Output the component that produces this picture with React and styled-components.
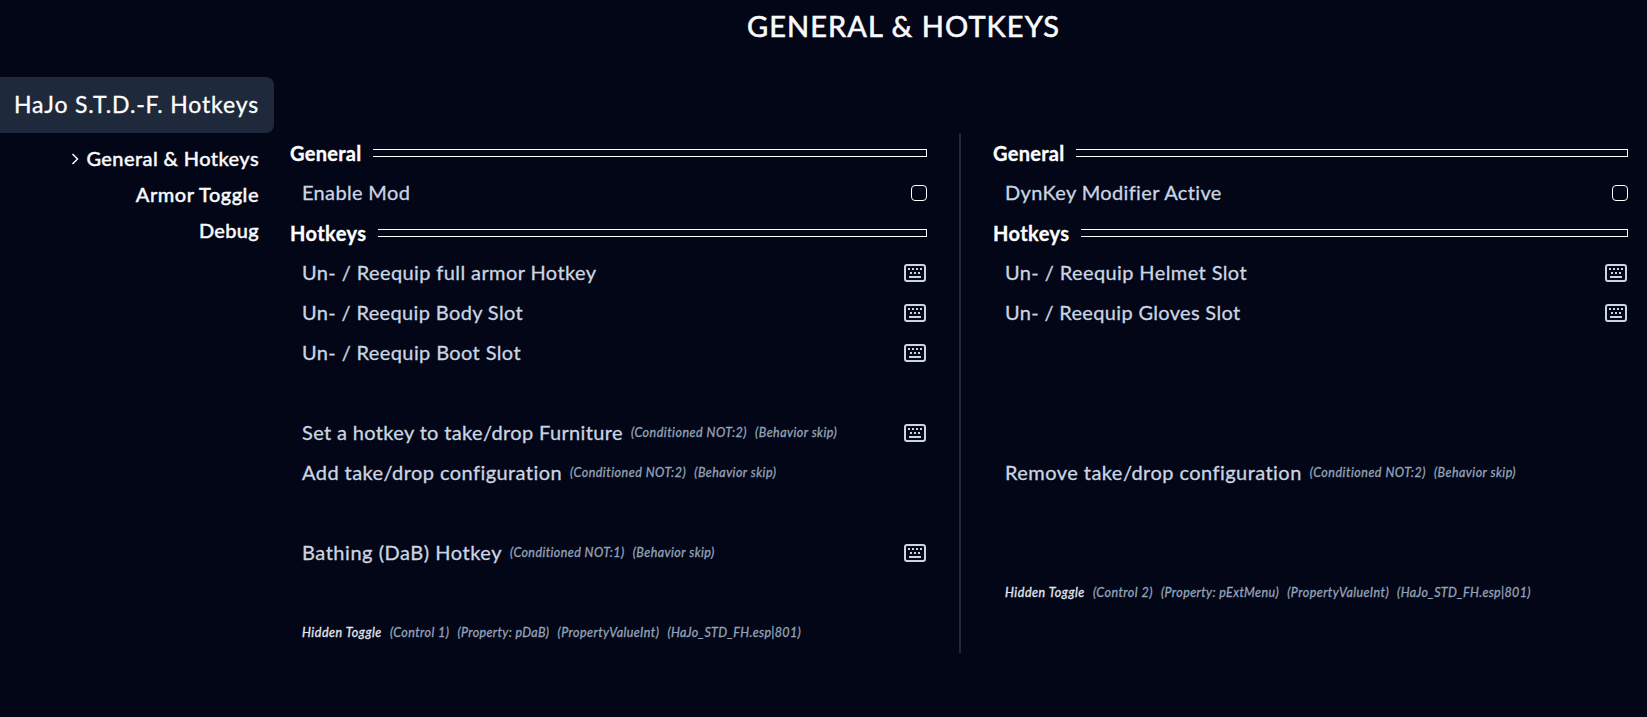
import React from "react";
import styled, { createGlobalStyle } from "styled-components";

const GlobalStyle = createGlobalStyle`
  * {
    box-sizing: border-box;
  }
  body {
    margin: 0;
    background: #020617;
    color: #fff;
    font-family: Lato, "Open Sans", sans-serif;
    -webkit-text-stroke: 0.3px;
  }
`;

const PageStyles = styled.div`
  height: 717px;
  overflow: hidden;
  background: #020617;
`;

const PageTitle = styled.h1`
  margin: 0;
  height: 77px;
  padding: 8px 0 0 160px;
  font-size: 29px;
  font-weight: 400;
  line-height: 36px;
  letter-spacing: 1.07px;
  text-align: center;
  text-transform: uppercase;
  color: #f8fafc;
  -webkit-text-stroke: 0.6px;
`;

const LayoutStyles = styled.div`
  display: flex;
  align-items: flex-start;
`;

const SidebarStyles = styled.nav`
  width: 274px;
  .mod__name {
    height: 56px;
    padding-right: 15px;
    background: #1e293b;
    border-radius: 0 8px 8px 0;
    font-size: 23px;
    line-height: 54px;
    letter-spacing: 0.85px;
    text-align: right;
    white-space: nowrap;
  }
  .mod__pages {
    margin: 0;
    padding: 8px 15px 0 0;
    list-style: none;
  }
`;

const NavItem = styled.li`
  display: flex;
  align-items: center;
  justify-content: flex-end;
  gap: 7px;
  height: 36px;
  padding-bottom: 2px;
  font-size: 20px;
  font-weight: 500;
  letter-spacing: ${(p) => p.$track}px;
  color: #f8fafc;
  -webkit-text-stroke: 0.4px;
`;

const GridStyles = styled.main`
  display: flex;
  flex: 1;
  height: 520px;
  margin-top: 56px;
`;

const ColumnStyles = styled.section`
  width: ${(p) => p.$width}px;
  padding: ${(p) => p.$padding};
  border-right: ${(p) => (p.$divided ? "2px solid #1e293b" : "0")};
`;

const HeadingStyles = styled.h2`
  display: flex;
  align-items: center;
  gap: 11px;
  height: 40px;
  margin: 0;
  font-size: 20px;
  font-weight: 700;
  letter-spacing: ${(p) => p.$track}px;
  &::after {
    content: "";
    flex: 1;
    height: 6px;
    border: 1px solid #fff;
    border-left: 0;
  }
`;

const RowStyles = styled.div`
  display: flex;
  align-items: center;
  gap: 8px;
  height: 40px;
  padding-left: 12px;
  white-space: nowrap;
`;

const Label = styled.span`
  padding-bottom: 2px;
  font-size: 20px;
  letter-spacing: ${(p) => p.$track}px;
  color: #cbd5e1;
`;

const Tag = styled.span`
  padding-bottom: 2px;
  font-size: 12.5px;
  font-style: italic;
  letter-spacing: ${(p) => p.$track}px;
  color: ${(p) => (p.$bright ? "#e2e8f0" : "#94a3b8")};
`;

const Checkbox = styled.span`
  width: 16px;
  height: 16px;
  margin-left: auto;
  border: 1px solid #fff;
  border-radius: 4px;
`;

const KeyIcon = styled.svg`
  width: 24px;
  height: 24px;
  margin-left: auto;
  fill: #cbd5e1;
`;

const ChevronIcon = styled.svg`
  width: 8px;
  height: 12px;
  margin-top: 2px;
  fill: none;
  stroke: #f8fafc;
  stroke-width: 1.5;
`;

const dots = [
  [6, 7],
  [10, 7],
  [14, 7],
  [18, 7],
  [8, 11],
  [12, 11],
  [16, 11],
];

function Keyboard() {
  return (
    <KeyIcon viewBox="0 0 24 24">
      <rect
        x="2"
        y="4"
        width="20"
        height="16"
        rx="2"
        fill="none"
        stroke="#cbd5e1"
        strokeWidth="2"
      />
      {dots.map(([x, y]) => (
        <rect key={`${x}-${y}`} x={x - 1} y={y} width="2" height="2" />
      ))}
      <rect x="6" y="15" width="12" height="2" />
    </KeyIcon>
  );
}

const pages = [
  { text: "General & Hotkeys", track: 0.41, active: true },
  { text: "Armor Toggle", track: 0.5 },
  { text: "Debug", track: 0.3 },
];

const skip = { text: "(Behavior skip)", track: 0.46 };
const notTwo = { text: "(Conditioned NOT:2)", track: 0.5 };
const notOne = { text: "(Conditioned NOT:1)", track: 0.42 };
const hidden = { text: "Hidden Toggle", track: 0.54, bright: true };
const valueInt = { text: "(PropertyValueInt)", track: 0.45 };
const plugin = { text: "(HaJo_STD_FH.esp|801)", track: 0.33 };

const leftRows = [
  { heading: "General", track: 0.3 },
  { label: "Enable Mod", track: 0.34, control: "check" },
  { heading: "Hotkeys", track: 0.43 },
  { label: "Un- / Reequip full armor Hotkey", track: 0.4, control: "key" },
  { label: "Un- / Reequip Body Slot", track: 0.36, control: "key" },
  { label: "Un- / Reequip Boot Slot", track: 0.387, control: "key" },
  {},
  {
    label: "Set a hotkey to take/drop Furniture",
    track: 0.36,
    tags: [notTwo, skip],
    control: "key",
  },
  { label: "Add take/drop configuration", track: 0.43, tags: [notTwo, skip] },
  {},
  {
    label: "Bathing (DaB) Hotkey",
    track: 0.535,
    tags: [notOne, skip],
    control: "key",
  },
  {},
  {
    tags: [
      hidden,
      { text: "(Control 1)", track: 0.43 },
      { text: "(Property: pDaB)", track: 0.36 },
      valueInt,
      plugin,
    ],
  },
];

const rightRows = [
  { heading: "General", track: 0.3 },
  { label: "DynKey Modifier Active", track: 0.36, control: "check" },
  { heading: "Hotkeys", track: 0.43 },
  { label: "Un- / Reequip Helmet Slot", track: 0.4, control: "key" },
  { label: "Un- / Reequip Gloves Slot", track: 0.33, control: "key" },
  {},
  {},
  {},
  {
    label: "Remove take/drop configuration",
    track: 0.45,
    tags: [notTwo, skip],
  },
  {},
  {},
  {
    tags: [
      hidden,
      { text: "(Control 2)", track: 0.47 },
      { text: "(Property: pExtMenu)", track: 0.4 },
      valueInt,
      plugin,
    ],
  },
];

function Row({ row }) {
  if (row.heading) {
    return <HeadingStyles $track={row.track}>{row.heading}</HeadingStyles>;
  }
  return (
    <RowStyles>
      {row.label && <Label $track={row.track}>{row.label}</Label>}
      {row.tags?.map((tag) => (
        <Tag key={tag.text} $track={tag.track} $bright={tag.bright}>
          {tag.text}
        </Tag>
      ))}
      {row.control === "check" && <Checkbox />}
      {row.control === "key" && <Keyboard />}
    </RowStyles>
  );
}

export default function App() {
  return (
    <PageStyles>
      <GlobalStyle />
      <PageTitle>General &amp; Hotkeys</PageTitle>
      <LayoutStyles>
        <SidebarStyles>
          <div className="mod__name">HaJo S.T.D.-F. Hotkeys</div>
          <ul className="mod__pages">
            {pages.map((page) => (
              <NavItem key={page.text} $track={page.track}>
                {page.active && (
                  <ChevronIcon viewBox="0 0 8 12">
                    <path d="M1.5 1 6.5 6l-5 5" />
                  </ChevronIcon>
                )}
                {page.text}
              </NavItem>
            ))}
          </ul>
        </SidebarStyles>
        <GridStyles>
          <ColumnStyles $width={687} $padding="0 32px 0 16px" $divided>
            {leftRows.map((row, i) => (
              <Row key={i} row={row} />
            ))}
          </ColumnStyles>
          <ColumnStyles $width={667} $padding="0 0 0 32px">
            {rightRows.map((row, i) => (
              <Row key={i} row={row} />
            ))}
          </ColumnStyles>
        </GridStyles>
      </LayoutStyles>
    </PageStyles>
  );
}
